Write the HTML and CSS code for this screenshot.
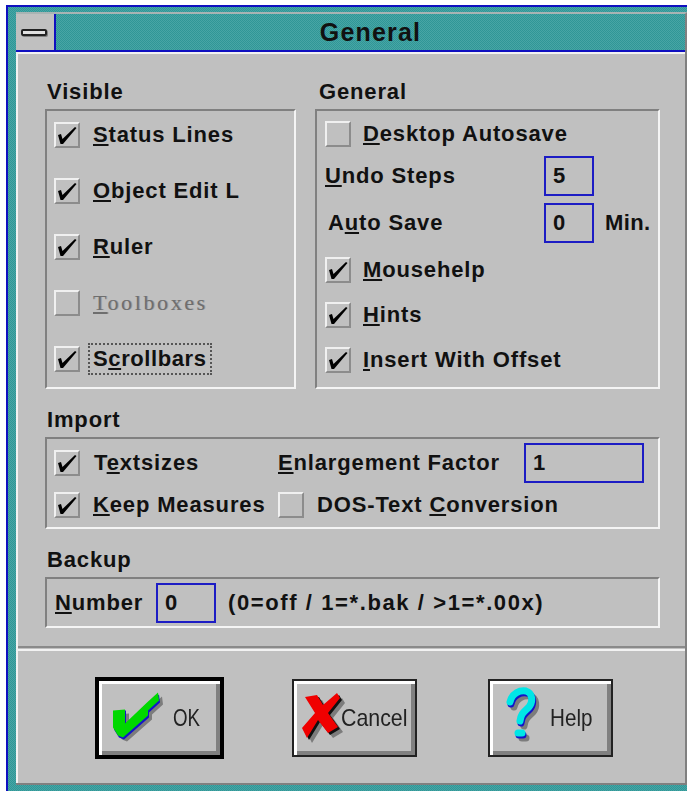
FILE: index.html
```html
<!DOCTYPE html>
<html lang="en">
<head>
<meta charset="utf-8">
<title>General</title>
<link rel="stylesheet" href="styles.css">
</head>
<body>
<svg class="defs" width="0" height="0" aria-hidden="true">
  <symbol id="tick" viewBox="0 0 26 26">
    <polygon points="4,13 7,12 8.5,17 21,5 22.5,6 9,22 6.5,22"/>
  </symbol>
</svg>

<div class="window">
  <div class="frame">
    <header class="titlebar">
      <div class="sysmenu"><span class="sysdash"></span></div>
      <div class="title">General</div>
    </header>

    <main class="client">
      <div class="content">
        <div class="columns">
          <section>
            <div class="heading">Visible</div>
            <div class="group visible">
              <div class="row"><span class="cb"><svg><use href="#tick"/></svg></span><span class="lbl"><u>S</u>tatus Lines</span></div>
              <div class="row"><span class="cb"><svg><use href="#tick"/></svg></span><span class="lbl"><u>O</u>bject Edit L</span></div>
              <div class="row"><span class="cb"><svg><use href="#tick"/></svg></span><span class="lbl"><u>R</u>uler</span></div>
              <div class="row"><span class="cb"></span><span class="lbl disabled"><u>T</u>oolboxes</span></div>
              <div class="row"><span class="cb"><svg><use href="#tick"/></svg></span><span class="lbl focused">S<u>c</u>rollbars</span></div>
            </div>
          </section>
          <section>
            <div class="heading heading-right">General</div>
            <div class="group general">
              <div class="row"><span class="cb"></span><span class="lbl tight"><u>D</u>esktop Autosave</span></div>
              <div class="row field"><span class="field-name"><u>U</u>ndo Steps</span><span class="input short">5</span></div>
              <div class="row field"><span class="field-name inset">A<u>u</u>to Save</span><span class="input short">0</span><span class="unit">Min.</span></div>
              <div class="checks">
                <div class="row"><span class="cb"><svg><use href="#tick"/></svg></span><span class="lbl tight"><u>M</u>ousehelp</span></div>
                <div class="row"><span class="cb"><svg><use href="#tick"/></svg></span><span class="lbl tight"><u>H</u>ints</span></div>
                <div class="row"><span class="cb"><svg><use href="#tick"/></svg></span><span class="lbl tight"><u>I</u>nsert With Offset</span></div>
              </div>
            </div>
          </section>
        </div>

        <section class="wide">
          <div class="heading">Import</div>
          <div class="group import">
            <div class="row"><span class="cb"><svg><use href="#tick"/></svg></span><span class="lbl lbl-wide">T<u>e</u>xtsizes</span></div>
            <span class="plain"><u>E</u>nlargement Factor</span>
            <span class="input long">1</span>
            <div class="row"><span class="cb"><svg><use href="#tick"/></svg></span><span class="lbl"><u>K</u>eep Measures</span></div>
            <div class="row span2"><span class="cb"></span><span class="lbl">DOS-Text <u>C</u>onversion</span></div>
          </div>
        </section>

        <section class="wide">
          <div class="heading">Backup</div>
          <div class="group backup">
            <span class="number"><u>N</u>umber</span>
            <span class="input mid">0</span>
            <span class="hint">(0=off / 1=*.bak / &gt;1=*.00x)</span>
          </div>
        </section>
      </div>

      <footer class="footer">
        <div class="actions">
          <button class="btn default" type="button">
            <svg class="ico ico-ok" viewBox="110 690.5 55 55">
              <polygon class="shade" points="117,714 129,713 129,727 151,706 162,696 163,704 152,714 152,719 127,741 122,739 117,731"/>
              <polygon fill="#1414c8" points="114,711 126,710 126,725 148,704 159,694 160,702 149,712 149,717 124,739 119,737 114,729"/>
              <polygon fill="#00d800" points="113,710 125,709 125,723 147,702 158,692 159,700 148,710 148,715 123,737 118,735 113,727"/>
            </svg>
            <span class="cap cap-ok">OK</span>
          </button>
          <button class="btn" type="button">
            <svg class="ico ico-cancel" viewBox="298 692 43 52">
              <polygon class="shade" points="310,702 322,700 328,710 342,698 345,703 333,718 343,732 333,738 323,725 312,743 307,733 320,718"/>
              <polygon fill="#101010" points="307,699 319,697 325,707 339,695 342,700 330,715 340,729 330,735 320,722 309,740 304,730 317,715"/>
              <polygon fill="#f00000" points="305,697 317,695 323,705 337,693 340,698 328,713 338,727 328,733 318,720 307,738 302,728 315,713"/>
            </svg>
            <span class="cap cap-cancel">Cancel</span>
          </button>
          <button class="btn help" type="button">
            <svg class="ico ico-help" viewBox="503 688 40 60">
              <g class="q-shade">
                <path d="M514 707C516 698 524 695 530 696C537 698 537 707 533 712C528 717 525 718 524 726"/>
                <path d="M522 738h4"/>
              </g>
              <g class="q-blue">
                <path d="M511 704C513 695 521 692 527 693C534 695 534 704 530 709C525 714 522 715 521 723"/>
                <path d="M519 735h4"/>
              </g>
              <g class="q-cyan">
                <path d="M510 702C512 693 520 690 526 691C533 693 533 702 529 707C524 712 521 713 520 721"/>
                <path d="M518 733h4"/>
              </g>
            </svg>
            <span class="cap cap-help">Help</span>
          </button>
        </div>
      </footer>
    </main>
  </div>
</div>
</body>
</html>
```

FILE: styles.css
```css
* { box-sizing: border-box; }

html, body { margin: 0; background: #fff; }

body {
  width: 687px;
  height: 791px;
  overflow: hidden;
  font: bold 22px/30px "Liberation Sans", Arial, sans-serif;
  letter-spacing: .85px;
  color: #111;
}

.defs { position: absolute; }

u { text-underline-offset: 2px; text-decoration-thickness: 2px; }

.window {
  width: 681px;
  height: 786px;
  margin: 5px 0 0 6px;
  padding: 5px 0 6px 8px;
  border-top: 2px solid #1010c0;
  border-left: 2px solid #1010c0;
  background-color: #3a9e9e;
  background-image: repeating-conic-gradient(#2f9797 0 25%, #48a5a5 0 50%);
  background-size: 2px 2px;
}

.frame {
  height: 100%;
  display: flex;
  flex-direction: column;
  border-top: 2px solid #a8b4b4;
  border-right: 2px solid #808080;
  border-bottom: 2px solid #808080;
}

/* Caption strip */
.titlebar {
  flex: none;
  height: 38px;
  display: flex;
  border-bottom: 2px solid #1010c0;
}

.sysmenu {
  flex: none;
  width: 40px;
  display: flex;
  align-items: center;
  justify-content: center;
  padding-right: 2px;
  background: #c0c0c0;
  border-right: 2px solid #1010c0;
}

.sysdash {
  width: 26px;
  height: 7px;
  background: #e0e0e0;
  border: 2px solid #222;
  border-radius: 2px;
  box-shadow: 1px 1px 0 #808080;
}

.title {
  flex: 1;
  text-align: center;
  font-size: 25px;
  line-height: 36px;
  letter-spacing: 1.2px;
}

/* Dialog surface */
.client {
  flex: 1;
  display: flex;
  flex-direction: column;
  background: #c0c0c0;
  border-top: 2px solid #f2f2f2;
  border-left: 2px solid #f2f2f2;
}

.content {
  flex: none;
  padding: 25px 25px 0 27px;
}

.columns {
  display: grid;
  grid-template-columns: 251px 345px;
  column-gap: 19px;
}

.wide { margin-top: 18px; }

.heading {
  height: 30px;
  padding-left: 2px;
  line-height: 26px;
}

.heading-right { padding-left: 4px; }

.group {
  border-style: solid;
  border-width: 2px;
  border-color: #808080 #f4f4f4 #f4f4f4 #808080;
}

.row {
  display: flex;
  align-items: center;
  height: 30px;
}

.cb {
  flex: none;
  width: 26px;
  height: 26px;
  border-style: solid;
  border-width: 2px;
  border-color: #f0f0f0 #8c8c8c #8c8c8c #f0f0f0;
}

.cb svg {
  display: block;
  width: 26px;
  height: 26px;
  margin: -2px;
  fill: #000;
}

.lbl { margin-left: 13px; }
.lbl.tight { margin-left: 12px; }
.lbl-wide { margin-left: 14px; }

.lbl.focused {
  outline: 2px dotted #555;
  outline-offset: 0;
  line-height: 28px;
  padding: 0 3px;
  margin-left: 10px;
  letter-spacing: .6px;
}

.lbl.disabled {
  font: normal 22px/30px "Liberation Serif", serif;
  letter-spacing: 2.6px;
  color: #6e6e6e;
  text-shadow: 1px 0 0 #a0a0a0;
}

/* Visible column */
.visible {
  height: 280px;
  padding: 9px 0 0 7px;
  display: flex;
  flex-direction: column;
  gap: 26px;
}

/* General column */
.general {
  height: 280px;
  padding: 8px 0 0 8px;
  display: flex;
  flex-direction: column;
  gap: 7px;
}

.field { height: 40px; }

.field-name { width: 219px; flex: none; }
.field-name.inset { padding-left: 3px; }

.unit { margin-left: 11px; letter-spacing: .4px; }

.checks {
  display: flex;
  flex-direction: column;
  gap: 15px;
  margin-top: 5px;
}

.input {
  flex: none;
  height: 40px;
  padding-left: 7px;
  line-height: 36px;
  border: 2px solid #1c1cc4;
}

.input.short { width: 50px; }
.input.mid { width: 60px; }
.input.long { width: 120px; }

/* Import group */
.import {
  height: 92px;
  padding: 4px 0 0 7px;
  display: grid;
  grid-template-columns: 224px 246px 120px;
  grid-template-rows: 40px 30px;
  row-gap: 7px;
  align-items: center;
}

.span2 { grid-column: span 2; }

/* Backup group */
.backup {
  height: 51px;
  padding: 4px 0 0 8px;
  display: flex;
  align-items: flex-start;
}

.number { width: 101px; line-height: 40px; }
.hint { margin-left: 12px; line-height: 40px; letter-spacing: 1.6px; }

/* Button strip */
.footer {
  flex: 1;
  display: flex;
  margin-top: 18px;
  padding-top: 1px;
  border-top: 2px solid #8a8a8a;
}

.actions {
  flex: 1;
  display: flex;
  align-items: center;
  padding: 2px 0 0 77px;
  gap: 68px;
  border-top: 2px solid #f2f2f2;
}

.btn {
  flex: none;
  width: 125px;
  height: 78px;
  display: flex;
  align-items: center;
  padding: 0 0 0 4px;
  background: #c0c0c0;
  border: 2px solid #222;
  box-shadow: inset 3px 3px 0 #fff, inset -4px -4px 0 #808080;
  font: normal 24px/30px "Liberation Sans", Arial, sans-serif;
  letter-spacing: 0;
  color: #222;
}

.btn.default {
  width: 129px;
  height: 82px;
  padding-left: 11px;
  border: 4px solid #000;
}

.btn.help { margin-left: 3px; padding-left: 13px; }

.ico { flex: none; overflow: visible; }
.ico-ok { width: 55px; height: 55px; margin-right: 8px; }
.ico-cancel { width: 43px; height: 52px; }
.ico-help { width: 40px; height: 60px; margin-right: 7px; }

.shade { fill: #7c7c7c; }

.q-shade, .q-blue, .q-cyan {
  fill: none;
  stroke-width: 7px;
  stroke-linecap: round;
}
.q-shade { stroke: #7c7c7c; }
.q-blue { stroke: #1414c8; }
.q-cyan { stroke: #00e6e6; }

.cap { transform-origin: left center; }
.cap-ok { transform: scaleX(.78); }
.cap-cancel { transform: scaleX(.89); }
.cap-help { transform: scaleX(.86); }
```
